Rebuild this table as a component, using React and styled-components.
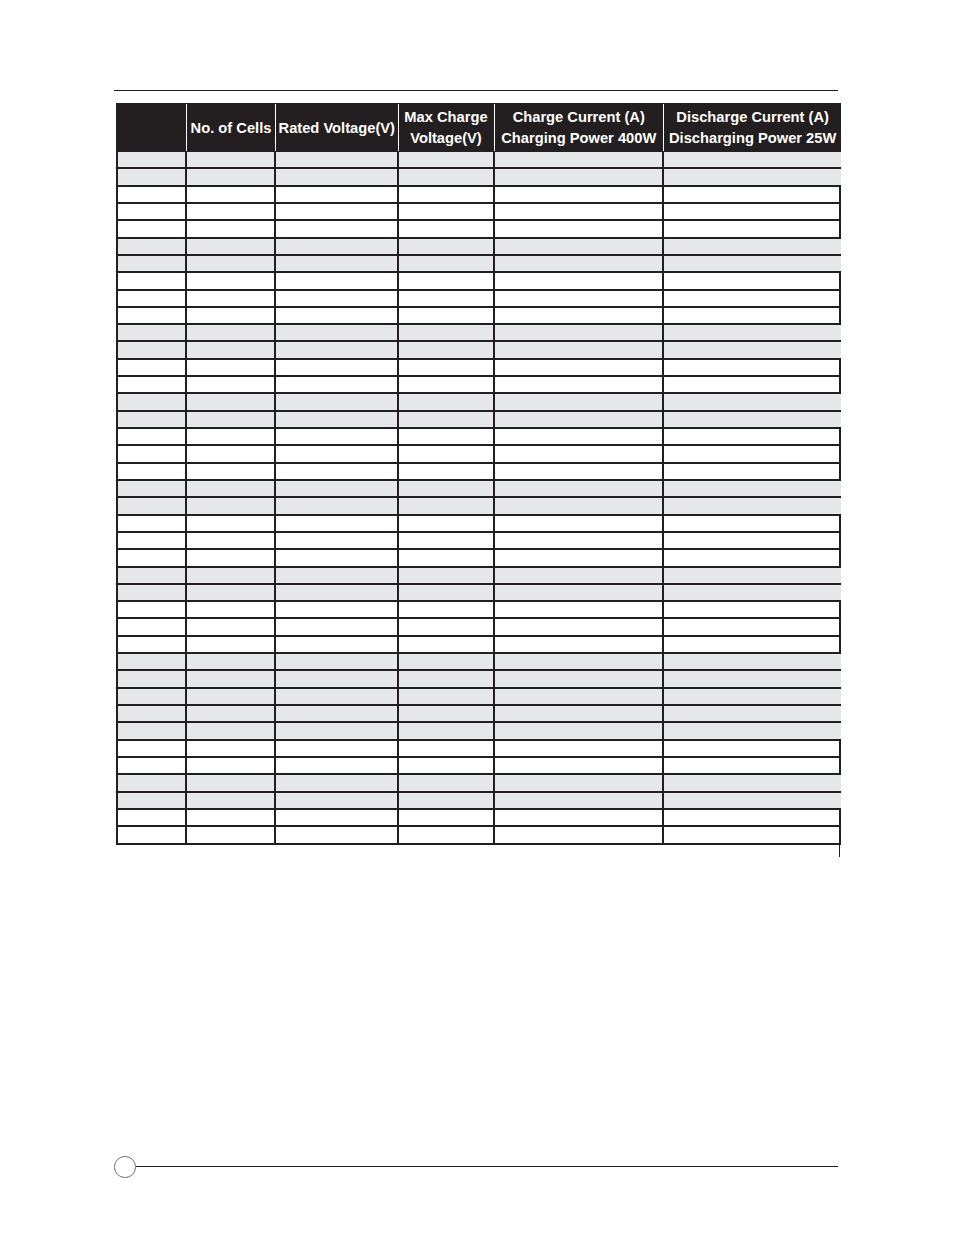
import React from "react";
import styled, { createGlobalStyle } from "styled-components";

const DARK = "#231f20";
const GRAY = "#e6e7e8";

const Global = createGlobalStyle`
  html, body { margin: 0; padding: 0; background: #fff; }
  body { font-family: "Liberation Sans", Arial, sans-serif; }
  * { box-sizing: border-box; }
`;

const Page = styled.div`
  width: 954px;
  height: 1235px;
  padding-top: 89.5px;
  display: flex;
  flex-direction: column;
`;

const TopRule = styled.div`
  margin-left: 114px;
  width: 724px;
  height: 1.5px;
  background: ${DARK};
  margin-bottom: 12px;
`;

const COLS = "69px 89px 122.5px 96px 169.5px 177.3px";

const Table = styled.div`
  margin-left: 116px;
  width: 725.3px;
  display: flex;
  flex-direction: column;
`;

const HeaderRow = styled.div`
  display: grid;
  grid-template-columns: ${COLS};
  height: 49px;
  background: ${DARK};
  border-left: 2px solid ${DARK};
`;

const HeadCell = styled.div`
  display: flex;
  align-items: center;
  justify-content: center;
  text-align: center;
  color: #fff;
  font-weight: 700;
  font-size: 14.7px;
  letter-spacing: 0;
  line-height: 21px;
  white-space: nowrap;
  padding-top: 1px;
  border-right: ${(p) => (p.$last ? "none" : "1px solid #fff")};
  margin: 1px 0;
`;

const Row = styled.div`
  display: grid;
  grid-template-columns: ${COLS};
  height: 17.325px;
  background: ${(p) => (p.$gray ? GRAY : "#fff")};
  border-left: 2px solid ${DARK};
  border-bottom: 2px solid ${DARK};
`;

const Cell = styled.div`
  border-right: 2px solid ${(p) => (p.$last && p.$gray ? "transparent" : DARK)};
`;

const Tick = styled.div`
  margin-left: 838.6px;
  width: 1.4px;
  height: 12px;
  background: ${DARK};
`;

const Footer = styled.div`
  margin-top: 299.5px;
  margin-left: 114px;
  width: 724px;
  display: flex;
  align-items: center;
`;

const PageCircle = styled.div`
  width: 21.5px;
  height: 21.5px;
  border-radius: 50%;
  border: 1px solid #6d6e71;
  flex: none;
`;

const FooterLine = styled.div`
  flex: 1;
  height: 1.4px;
  background: ${DARK};
`;

const pattern = "GGWWWGGWWWGGWWGGWWWGGWWWGGWWWGGGGGWWGGWW";

const headers = [
  [""],
  ["No. of Cells"],
  ["Rated Voltage(V)"],
  ["Max Charge", "Voltage(V)"],
  ["Charge Current (A)", "Charging Power 400W"],
  ["Discharge Current (A)", "Discharging Power 25W"],
];

export default function App() {
  return (
    <>
      <Global />
      <Page>
        <TopRule />
        <Table>
          <HeaderRow>
            {headers.map((lines, i) => (
              <HeadCell key={i} $last={i === headers.length - 1}>
                <div>
                  {lines.map((l, j) => (
                    <div key={j}>{l}</div>
                  ))}
                </div>
              </HeadCell>
            ))}
          </HeaderRow>
          {pattern.split("").map((c, r) => {
            const gray = c === "G";
            return (
              <Row key={r} $gray={gray}>
                {headers.map((_, i) => (
                  <Cell key={i} $gray={gray} $last={i === headers.length - 1} />
                ))}
              </Row>
            );
          })}
        </Table>
        <Tick />
        <Footer>
          <PageCircle />
          <FooterLine />
        </Footer>
      </Page>
    </>
  );
}
